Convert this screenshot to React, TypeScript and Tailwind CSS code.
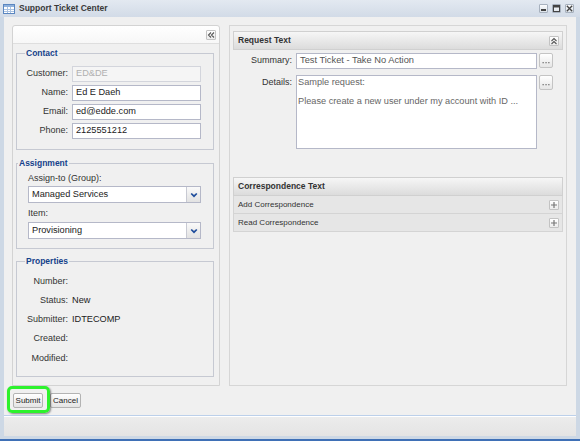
import React from "react";

function TitleIcon() {
  return (
    <svg width="12" height="10" viewBox="0 0 12 10">
      <rect x="0.5" y="0.5" width="11" height="9" fill="#fff" stroke="#5a86c0" />
      <rect x="1" y="1" width="10" height="2" fill="#8fb1dc" />
      <path d="M4.5 3v6M7.5 3v6M1 5.5h10M1 7.5h10" stroke="#a9c2e2" strokeWidth="1" />
    </svg>
  );
}

function WinBtn({ kind }: { kind: "min" | "max" | "close" }) {
  return (
    <div className="w-[9px] h-[9px] border border-[#a7b1be] rounded-[1px] bg-gradient-to-b from-[#fbfcfd] to-[#dde3ea] flex items-center justify-center">
      <svg width="7" height="7" viewBox="0 0 7 7">
        {kind === "min" && <rect x="1" y="4" width="5" height="2" fill="#444" />}
        {kind === "max" && (
          <>
            <rect x="0.5" y="0.5" width="6" height="6" fill="none" stroke="#444" />
            <rect x="0.5" y="0.5" width="6" height="2" fill="#444" />
          </>
        )}
        {kind === "close" && <path d="M0.8 0.8l5.4 5.4M6.2 0.8L0.8 6.2" stroke="#444" strokeWidth="1.3" />}
      </svg>
    </div>
  );
}

function SmallBtn({ children }: { children: React.ReactNode }) {
  return (
    <div className="w-[10px] h-[10px] border border-[#c3c3c3] rounded-[1px] bg-gradient-to-b from-white to-[#ececec] flex items-center justify-center">
      {children}
    </div>
  );
}

function ChevLeft() {
  return (
    <svg width="8" height="8" viewBox="0 0 8 8">
      <path d="M4 1.5L1.5 4 4 6.5M7 1.5L4.5 4 7 6.5" stroke="#555" strokeWidth="1.1" fill="none" />
    </svg>
  );
}

function ChevUp() {
  return (
    <svg width="8" height="8" viewBox="0 0 8 8">
      <path d="M1.5 4L4 1.5 6.5 4M1.5 7L4 4.5 6.5 7" stroke="#555" strokeWidth="1.1" fill="none" />
    </svg>
  );
}

function Plus() {
  return (
    <svg width="8" height="8" viewBox="0 0 8 8">
      <path d="M4 1v6M1 4h6" stroke="#777" strokeWidth="1.2" />
    </svg>
  );
}

function Field({ value, disabled }: { value: string; disabled?: boolean }) {
  return (
    <div
      className={
        "ml-[4px] w-[129px] h-[16px] border flex items-center px-[3px] text-[9.2px] " +
        (disabled ? "bg-[#f5f5f5] border-[#d3d5dc] text-[#b0b0b0]" : "bg-white border-[#b5b8c8] text-[#222]")
      }
    >
      {value}
    </div>
  );
}

function ContactRow({ label, value, disabled }: { label: string; value: string; disabled?: boolean }) {
  return (
    <div className="flex items-center">
      <div className="w-[51px] text-right text-[9px] text-[#333]">{label}</div>
      <Field value={value} disabled={disabled} />
    </div>
  );
}

function Select({ value }: { value: string }) {
  return (
    <div className="w-[173px] h-[17px] border border-[#b5b8c8] flex bg-white">
      <div className="flex-1 flex items-center px-[3px] text-[9.2px] text-[#222]">{value}</div>
      <div className="w-[14px] border-l border-[#c8cad3] bg-gradient-to-b from-[#fafafa] to-[#e2e2e2] flex items-center justify-center">
        <svg width="8" height="6" viewBox="0 0 8 6">
          <path d="M1.2 1.5L4 4.2 6.8 1.5" stroke="#1f4d9c" strokeWidth="1.7" fill="none" />
        </svg>
      </div>
    </div>
  );
}

function PropRow({ label, value }: { label: string; value?: string }) {
  return (
    <div className="h-[19.2px] flex items-center">
      <div className="w-[51px] text-right text-[9px] text-[#333]">{label}</div>
      <div className="ml-[4px] text-[9.2px] text-[#222]">{value}</div>
    </div>
  );
}

function DotsBtn() {
  return (
    <div className="ml-[2px] w-[14px] h-[15px] border border-[#c4c4c4] rounded-[2px] bg-gradient-to-b from-white to-[#e6e6e6] flex items-end justify-center pb-[3px]">
      <svg width="8" height="2" viewBox="0 0 8 2">
        <rect x="0.5" y="0" width="1.3" height="1.3" fill="#777" />
        <rect x="3.4" y="0" width="1.3" height="1.3" fill="#777" />
        <rect x="6.2" y="0" width="1.3" height="1.3" fill="#777" />
      </svg>
    </div>
  );
}

function SectionHeader({ title, children }: { title: string; children?: React.ReactNode }) {
  return (
    <div className="h-[19px] border border-[#d0d0d0] bg-gradient-to-b from-[#f6f6f6] to-[#dcdcdc] flex items-center pl-[4px] pr-[3px] text-[8.5px] font-bold text-[#333]">
      <span>{title}</span>
      <div className="ml-auto">{children}</div>
    </div>
  );
}

function CorrRow({ label }: { label: string }) {
  return (
    <div className="h-[18px] border-x border-b border-[#d4d4d4] bg-[#e6e6e6] flex items-center pl-[4px] pr-[3px] text-[8px] text-[#333]">
      <span>{label}</span>
      <div className="ml-auto">
        <SmallBtn>
          <Plus />
        </SmallBtn>
      </div>
    </div>
  );
}

export default function App() {
  return (
    <div className="w-[580px] h-[441px] flex flex-col bg-[#cdd8e5] font-['Liberation_Sans',Arial,sans-serif] overflow-hidden">
      {/* title bar */}
      <div className="h-[17px] flex items-center pl-[3px] pr-[6px] bg-gradient-to-b from-[#e3e9f1] to-[#d2dbe7]">
        <TitleIcon />
        <span className="ml-[4px] text-[8.5px] font-bold text-[#3a3a3a]">Support Ticket Center</span>
        <div className="ml-auto flex items-center gap-[4px]">
          <WinBtn kind="min" />
          <WinBtn kind="max" />
          <WinBtn kind="close" />
        </div>
      </div>

      <div className="mx-[4px] flex flex-col">
        {/* body */}
        <div className="h-[398px] bg-[#f0f0f0] flex flex-col">
          <div className="flex gap-[9px] pl-[8px] pr-[9px] pt-[8px]">
            {/* left panel */}
            <div className="w-[208px] h-[361px] border border-[#d3d3d3] rounded-t-[3px] flex flex-col">
              <div className="h-[18px] rounded-t-[3px] bg-gradient-to-b from-white to-[#f7f7f7] border-b border-[#dedede] flex items-center justify-end pr-[3px]">
                <SmallBtn>
                  <ChevLeft />
                </SmallBtn>
              </div>
              <div className="pl-[3px] pr-[5px] pt-[4px] flex flex-col">
                <fieldset className="border border-[#c6c9d2] pb-[10px]">
                  <legend className="ml-[8px] px-[1px] text-[8.5px] leading-[10px] font-bold text-[#15428b]">Contact</legend>
                  <div className="flex flex-col gap-[3px] pt-[8px]">
                    <ContactRow label="Customer:" value="ED&DE" disabled />
                    <ContactRow label="Name:" value="Ed E Daeh" />
                    <ContactRow label="Email:" value="ed@edde.com" />
                    <ContactRow label="Phone:" value="2125551212" />
                  </div>
                </fieldset>

                <fieldset className="mt-[8px] border border-[#c6c9d2] pb-[9px]">
                  <legend className="ml-[1px] px-[1px] text-[8.5px] leading-[10px] font-bold text-[#15428b]">Assignment</legend>
                  <div className="pl-[11px] pt-[5px] flex flex-col">
                    <div className="text-[9px] leading-[11px] text-[#333]">Assign-to (Group):</div>
                    <div className="mt-[2px]">
                      <Select value="Managed Services" />
                    </div>
                    <div className="mt-[5px] text-[9px] leading-[11px] text-[#333]">Item:</div>
                    <div className="mt-[3px]">
                      <Select value="Provisioning" />
                    </div>
                  </div>
                </fieldset>

                <fieldset className="mt-[7px] border border-[#c6c9d2] pb-[8px]">
                  <legend className="ml-[8px] px-[1px] text-[8.5px] leading-[10px] font-bold text-[#15428b]">Properties</legend>
                  <div className="pt-[6px] flex flex-col">
                    <PropRow label="Number:" />
                    <PropRow label="Status:" value="New" />
                    <PropRow label="Submitter:" value="IDTECOMP" />
                    <PropRow label="Created:" />
                    <PropRow label="Modified:" />
                  </div>
                </fieldset>
              </div>
            </div>

            {/* right panel */}
            <div className="w-[338px] h-[361px] border border-[#d6d6d6] pt-[5px] px-[3px] flex flex-col">
              <SectionHeader title="Request Text">
                <SmallBtn>
                  <ChevUp />
                </SmallBtn>
              </SectionHeader>
              <div className="mt-[3px] flex items-start">
                <div className="w-[59px] h-[16px] flex items-center justify-end text-[9px] text-[#333]">Summary:</div>
                <div className="ml-[4px] w-[241px] h-[16px] border border-[#b5b8c8] bg-white flex items-center px-[3px] text-[9.3px] text-[#555]">
                  Test Ticket - Take No Action
                </div>
                <DotsBtn />
              </div>
              <div className="mt-[6px] flex items-start">
                <div className="w-[59px] pt-[2px] leading-[11px] text-right text-[9px] text-[#333]">Details:</div>
                <div className="ml-[4px] w-[241px] h-[74px] border border-[#b5b8c8] bg-white px-[1px] pt-[2px] text-[9.2px] leading-[9.7px] text-[#666]">
                  <div>Sample request:</div>
                  <div>&nbsp;</div>
                  <div>Please create a new user under my account with ID ...</div>
                </div>
                <DotsBtn />
              </div>
              <div className="mt-[28px]">
                <SectionHeader title="Correspondence Text" />
                <CorrRow label="Add Correspondence" />
                <CorrRow label="Read Correspondence" />
              </div>
            </div>
          </div>

          {/* buttons */}
          <div className="mt-[7px] pl-[9px] flex items-center gap-[7px]">
            <div className="relative">
              <div className="absolute -left-[6px] -top-[7px] w-[43px] h-[27px] border-[3px] border-[#2df22d] rounded-[5px] shadow-[1px_1px_2px_rgba(0,0,0,0.45)]" />
              <div className="w-[30px] h-[15px] border border-[#b3b3b3] rounded-[2px] bg-gradient-to-b from-white to-[#e4e4e4] flex items-center justify-center text-[8px] text-[#222]">
                Submit
              </div>
            </div>
            <div className="w-[31px] h-[15px] border border-[#b3b3b3] rounded-[2px] bg-gradient-to-b from-white to-[#e4e4e4] flex items-center justify-center text-[8px] text-[#222]">
              Cancel
            </div>
          </div>
        </div>

        {/* footer */}
        <div className="h-[21px] border-t border-[#bcd0ea] flex flex-col">
          <div className="h-[1px] bg-white" />
          <div className="flex-1 bg-gradient-to-b from-[#ececec] to-[#e4e4e4]" />
        </div>
      </div>
      <div className="flex-1 border-b-2 border-[#3f70b6]" />
    </div>
  );
}
